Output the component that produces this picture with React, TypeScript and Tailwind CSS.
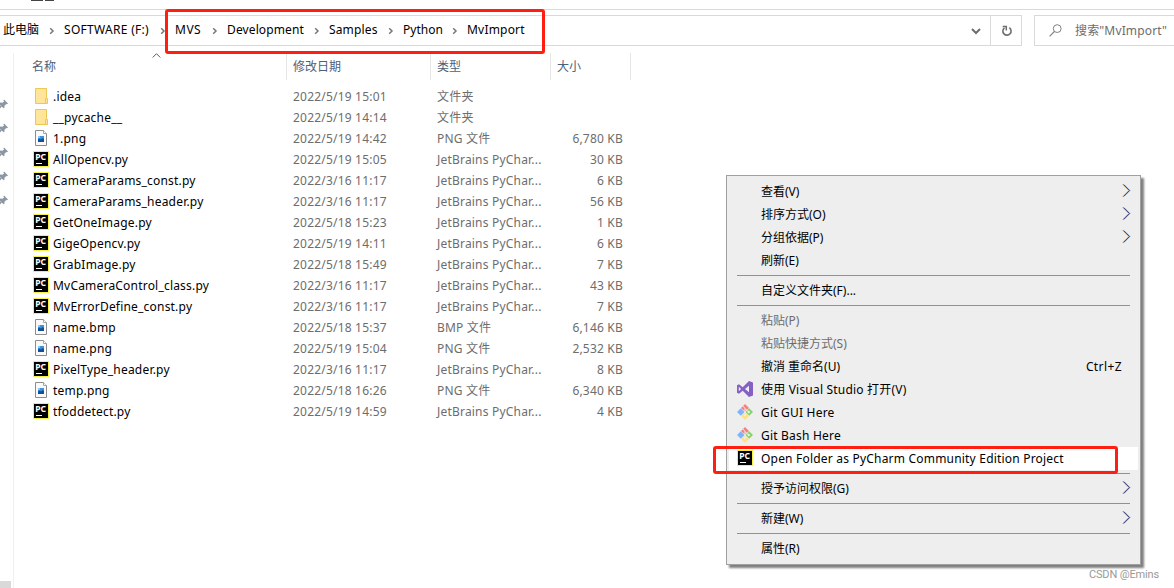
import React from 'react';

type FileKind = 'folder' | 'image' | 'python';

interface FileEntry {
  name: string;
  kind: FileKind;
  modified: string;
  type: string;
  size?: string;
}

const files: FileEntry[] = [
  { name: '.idea', kind: 'folder', modified: '2022/5/19 15:01', type: '文件夹' },
  { name: '__pycache__', kind: 'folder', modified: '2022/5/19 14:14', type: '文件夹' },
  { name: '1.png', kind: 'image', modified: '2022/5/19 14:42', type: 'PNG 文件', size: '6,780 KB' },
  { name: 'AllOpencv.py', kind: 'python', modified: '2022/5/19 15:05', type: 'JetBrains PyChar...', size: '30 KB' },
  { name: 'CameraParams_const.py', kind: 'python', modified: '2022/3/16 11:17', type: 'JetBrains PyChar...', size: '6 KB' },
  { name: 'CameraParams_header.py', kind: 'python', modified: '2022/3/16 11:17', type: 'JetBrains PyChar...', size: '56 KB' },
  { name: 'GetOneImage.py', kind: 'python', modified: '2022/5/18 15:23', type: 'JetBrains PyChar...', size: '1 KB' },
  { name: 'GigeOpencv.py', kind: 'python', modified: '2022/5/19 14:11', type: 'JetBrains PyChar...', size: '6 KB' },
  { name: 'GrabImage.py', kind: 'python', modified: '2022/5/18 15:49', type: 'JetBrains PyChar...', size: '7 KB' },
  { name: 'MvCameraControl_class.py', kind: 'python', modified: '2022/3/16 11:17', type: 'JetBrains PyChar...', size: '43 KB' },
  { name: 'MvErrorDefine_const.py', kind: 'python', modified: '2022/3/16 11:17', type: 'JetBrains PyChar...', size: '7 KB' },
  { name: 'name.bmp', kind: 'image', modified: '2022/5/18 15:37', type: 'BMP 文件', size: '6,146 KB' },
  { name: 'name.png', kind: 'image', modified: '2022/5/19 15:04', type: 'PNG 文件', size: '2,532 KB' },
  { name: 'PixelType_header.py', kind: 'python', modified: '2022/3/16 11:17', type: 'JetBrains PyChar...', size: '8 KB' },
  { name: 'temp.png', kind: 'image', modified: '2022/5/18 16:26', type: 'PNG 文件', size: '6,340 KB' },
  { name: 'tfoddetect.py', kind: 'python', modified: '2022/5/19 14:59', type: 'JetBrains PyChar...', size: '4 KB' },
];

const crumbs = [
  { label: '此电脑', width: 'w-[36px]' },
  { label: 'SOFTWARE (F:)', width: 'w-[86px] tracking-[0.3px]' },
  { label: 'MVS', width: 'w-[27px] tracking-[0.5px]' },
  { label: 'Development', width: 'w-[77px] tracking-[0.12px]' },
  { label: 'Samples', width: 'w-[49px] tracking-[0.15px]' },
  { label: 'Python', width: 'w-[39px]' },
  { label: 'MvImport', width: 'w-[60px] tracking-[0.2px]' },
];

interface MenuEntry {
  label?: string;
  icon?: 'vs' | 'git' | 'pycharm';
  shortcut?: string;
  submenu?: boolean;
  disabled?: boolean;
  active?: boolean;
}

// An entry without a label is a separator
const menu: MenuEntry[] = [
  { label: '查看(V)', submenu: true },
  { label: '排序方式(O)', submenu: true },
  { label: '分组依据(P)', submenu: true },
  { label: '刷新(E)' },
  {},
  { label: '自定义文件夹(F)...' },
  {},
  { label: '粘贴(P)', disabled: true },
  { label: '粘贴快捷方式(S)', disabled: true },
  { label: '撤消 重命名(U)', shortcut: 'Ctrl+Z' },
  { label: '使用 Visual Studio 打开(V)', icon: 'vs' },
  { label: 'Git GUI Here', icon: 'git' },
  { label: 'Git Bash Here', icon: 'git' },
  { label: 'Open Folder as PyCharm Community Edition Project', icon: 'pycharm', active: true },
  {},
  { label: '授予访问权限(G)', submenu: true },
  {},
  { label: '新建(W)', submenu: true },
  {},
  { label: '属性(R)' },
];

const PyCharmIcon = () => (
  <svg width="16" height="16" viewBox="0 0 16 16" className="mb-px shrink-0">
    <rect width="16" height="16" fill="#f6f04a" />
    <rect x="1" y="1" width="14" height="14" fill="#000" />
    <text x="2.2" y="8.6" fill="#fff" className="font-['Noto_Sans',sans-serif] text-[8.5px] font-bold tracking-normal">
      PC
    </text>
    <path d="M3 12.5h6" stroke="#fff" strokeWidth="1" />
  </svg>
);

const FolderIcon = () => (
  <svg width="16" height="16" viewBox="0 0 16 16" className="mb-px shrink-0">
    <path d="M2.5.5h11v10h1v5h-12z" fill="#ffe59a" stroke="#ecc755" />
    <path d="M12.5 15V10.5l1-1" fill="none" stroke="#ecc755" />
  </svg>
);

const ImageIcon = () => (
  <svg width="16" height="16" viewBox="0 0 16 16" className="mb-px shrink-0">
    <path d="M2.5.5h8l3 3v12h-11z" fill="#fafafa" stroke="#8c8c8c" />
    <path d="M10.5.5v3h3" fill="#fff" stroke="#a5a5a5" />
    <rect x="5" y="6" width="6" height="6" fill="#3b93e2" />
    <path d="M5 12V9.5l1.5-1 1.5 1L9.5 8 11 9v3z" fill="#174f97" />
    <rect x="5" y="6" width="2" height="2" fill="#8cc6f5" />
  </svg>
);

const VisualStudioIcon = () => (
  <svg width="16" height="16" viewBox="0 0 16 16" className="mb-px shrink-0">
    <path
      d="M12 0l4 1.6v12.8L12 16 5.7 9.8 2 12.8l-2-1V4.2l2-1 3.7 3L12 0zM12 4.8L8 8l4 3.2zM1.8 5.8v4.4L4 8z"
      fill="#865fc5"
      fillRule="evenodd"
    />
  </svg>
);

const GitIcon = () => (
  <svg width="16" height="16" viewBox="0 0 16 16" className="mb-px shrink-0">
    <path d="M8 0l4 4-4 3.6L4 4z" fill="#f58080" />
    <path d="M3.8 4.2L7.6 8l-3.8 3.8L0 8z" fill="#80b3ff" />
    <path d="M12.2 4.2L16 8l-3.8 3.8L8.4 8z" fill="#85d36b" />
    <path d="M8 8.4l4 3.6-4 4-4-4z" fill="#ffe184" />
    <path d="M5.8 2l2.2 2.3V11M8.2 4.6l3 3" stroke="#eeeeee" fill="none" />
    <circle cx="11.7" cy="8" r="1.2" fill="#eeeeee" />
    <circle cx="8" cy="11.2" r="1" fill="#eeeeee" />
  </svg>
);

const PinIcon = () => (
  <svg width="8" height="10" viewBox="0 0 8 10">
    <path d="M4 .4l4 4-1 .9-.8-.2L4.4 7l.2 1.6-1 .7L1.8 7.6 0 9.4V7.2l.6-.8L0 5.8V3.6l2.4.2L4.2 2.3l-.9-1z" fill="#8b97a2" />
  </svg>
);

const CrumbArrow = () => (
  <span className="flex w-[25px] justify-center">
    <svg width="6" height="8" viewBox="0 0 6 8" className="mt-px">
      <path d="M1.2 1.2L4 4 1.2 6.8" fill="none" stroke="#777" strokeWidth="1.5" />
    </svg>
  </span>
);

const SubmenuArrow = () => (
  <svg width="9" height="13" viewBox="0 0 9 13" className="mb-[2px]">
    <path d="M.8 .5l6 6-6 6" fill="none" stroke="#e0a060" strokeWidth=".8" />
    <path d="M2 .5l6 6-6 6" fill="none" stroke="#4a9df0" strokeWidth=".8" />
    <path d="M1.4 .5l6 6-6 6" fill="none" stroke="#26265c" strokeWidth=".8" />
  </svg>
);

const fileIcons: Record<FileKind, React.ReactNode> = {
  folder: <FolderIcon />,
  image: <ImageIcon />,
  python: <PyCharmIcon />,
};

const menuIcons = {
  vs: <VisualStudioIcon />,
  git: <GitIcon />,
  pycharm: <PyCharmIcon />,
};

const AddressBar = () => (
  <div className="flex h-[31px] shrink-0 gap-3">
    <div className="flex w-[1022px] border-y border-r border-[#d9d9d9]">
      <div className="flex flex-1 items-center pb-px pl-[3px] text-black">
        {crumbs.map((crumb, index) => (
          <React.Fragment key={crumb.label}>
            {index > 0 && <CrumbArrow />}
            <span className={`${crumb.width} whitespace-nowrap`}>{crumb.label}</span>
          </React.Fragment>
        ))}
        <svg width="10" height="7" viewBox="0 0 10 7" className="mt-[3px] mr-[9px] ml-auto">
          <path d="M1 1l4 4 4-4" fill="none" stroke="#6e6e6e" strokeWidth="2" />
        </svg>
      </div>
      <div className="flex w-[31px] items-center justify-center border-l border-[#d9d9d9]">
        <svg width="12" height="12" viewBox="0 0 12 12" className="mt-px ml-0.5">
          <path d="M8.3 2.7a4.1 4.1 0 1 1-4.8.1" fill="none" stroke="#6e6e6e" strokeWidth="1.6" />
          <path d="M1.7 1.6h3.6v3.8" fill="none" stroke="#6e6e6e" strokeWidth="1.5" />
        </svg>
      </div>
    </div>
    <div className="flex flex-1 items-center border-y border-l border-[#d9d9d9] pl-[14px] tracking-[0.15px] whitespace-nowrap text-[#6d6d6d]">
      <svg width="13" height="13" viewBox="0 0 13 13" className="mr-[13px] mb-px shrink-0">
        <circle cx="8.2" cy="4.6" r="3.9" fill="none" stroke="#808080" />
        <path d="M5.4 7.5L.6 12.3" stroke="#808080" strokeWidth="1.1" />
      </svg>
      搜索"MvImport"
    </div>
  </div>
);

const ContextMenu = () => (
  <div className="absolute top-[175px] left-[726px] h-[390px] w-[415px] border border-[#a0a0a0] bg-[#eeeeee] px-[2px] py-1 text-black shadow-[3px_3px_2px_0_rgba(0,0,0,0.5)]">
    {menu.map((entry, index) =>
      entry.label ? (
        <div
          key={index}
          className={`flex h-[23px] items-center pr-[7px] pl-2 whitespace-nowrap ${entry.active ? 'bg-white' : ''} ${
            entry.disabled ? 'text-[#6d6d6d]' : ''
          }`}
        >
          <span className="flex w-6 shrink-0">{entry.icon && menuIcons[entry.icon]}</span>
          <span className={`flex-1 ${entry.icon ? 'tracking-[0.2px]' : ''}`}>{entry.label}</span>
          {entry.shortcut && <span className="mr-[9px] tracking-[0.4px]">{entry.shortcut}</span>}
          {entry.submenu && <SubmenuArrow />}
        </div>
      ) : (
        <div key={index} className="mx-2 flex h-[7px] items-center">
          <div className="h-px w-full bg-[#919191]" />
        </div>
      )
    )}
  </div>
);

const App: React.FC = () => {
  return (
    <div className="relative flex h-[588px] w-[1174px] flex-col overflow-hidden bg-white font-['Noto_Sans','Noto_Sans_CJK_SC',sans-serif] text-[12px] leading-[16px]">
      {/* Bottom edge of the ribbon */}
      <div className="mb-[5px] flex h-[10px] shrink-0 items-start gap-0.5 border-b border-[#d9d9d9] pl-[31px]">
        <div className="h-px w-3 bg-[#444]" />
        <div className="h-px w-[9px] bg-[#444]" />
      </div>

      <AddressBar />

      <div className="flex flex-1 pt-[7px]">
        {/* Navigation pane */}
        <div className="flex w-[14px] flex-col justify-between border-r border-[#f0f0f0] pt-[46px]">
          <div className="flex flex-col gap-[14px]">
            {[0, 1, 2, 3, 4].map((pin) => (
              <PinIcon key={pin} />
            ))}
          </div>
          <div className="h-[7px] w-[11px] bg-[#d9d9d9]" />
        </div>

        {/* File list */}
        <div className="w-[617px]">
          <div className="mb-[6px] flex h-[27px] text-[#4c607a]">
            <div className="relative flex w-[273px] items-center border-r border-[#e5e5e5] pl-[18px]">
              名称
              <svg width="9" height="5" viewBox="0 0 9 5" className="absolute top-0 left-[138px]">
                <path d="M.7 4.5l3.8-3.8 3.8 3.8" fill="none" stroke="#5a5a5a" />
              </svg>
            </div>
            <div className="flex w-[144px] items-center border-r border-[#e5e5e5] pl-[6px]">修改日期</div>
            <div className="flex w-[120px] items-center border-r border-[#e5e5e5] pl-[6px]">类型</div>
            <div className="flex w-[80px] items-center border-r border-[#e5e5e5] pl-[6px]">大小</div>
          </div>
          {files.map((file) => (
            <div key={file.name} className="flex h-[21px] items-center tracking-[0.2px] whitespace-nowrap text-[#6d6d6d]">
              <div className="flex w-[279px] items-center gap-1 pl-[19px] text-black">
                {fileIcons[file.kind]}
                <span>{file.name}</span>
              </div>
              <div className="w-[144px]">{file.modified}</div>
              <div className="w-[106px]">{file.type}</div>
              <div className="w-[80px] text-right">{file.size}</div>
            </div>
          ))}
        </div>
      </div>

      <ContextMenu />

      {/* Red highlight frames */}
      <div className="absolute top-[9px] left-[165px] h-[45px] w-[380px] rounded-[3px] border-3 border-[#ff1f12]" />
      <div className="absolute top-[446px] left-[713px] h-[28px] w-[405px] rounded-[3px] border-3 border-[#ff1f12]" />

      <div className="absolute right-[15px] bottom-[5px] font-['Roboto',sans-serif] text-[11px] tracking-[-0.15px] text-[#999]">
        CSDN @Emins
      </div>
    </div>
  );
};

export default App;
